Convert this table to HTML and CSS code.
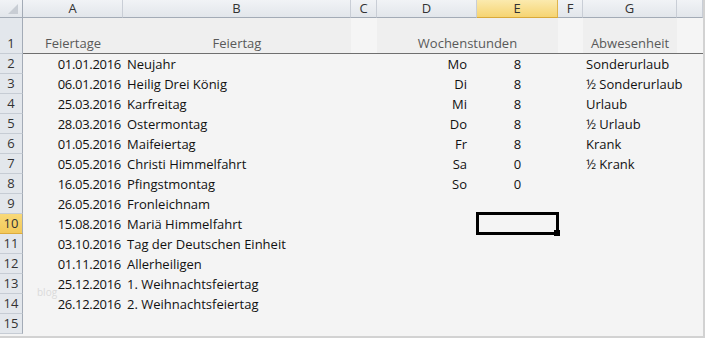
FILE: index.html
```html
<!DOCTYPE html>
<html lang="de">
<head>
    <meta charset="UTF-8">
    <meta name="viewport" content="width=device-width, initial-scale=1.0">
    <title>Feiertage 2016</title>
    <link rel="stylesheet" href="styles.css">
</head>
<body>
    <div class="sheet">
        <!-- column letters -->
        <div class="corner"></div>
        <div class="col-head">A</div>
        <div class="col-head">B</div>
        <div class="col-head">C</div>
        <div class="col-head">D</div>
        <div class="col-head active">E</div>
        <div class="col-head">F</div>
        <div class="col-head">G</div>
        <div class="col-head"></div>

        <!-- row 1: titles -->
        <div class="row-head tall">1</div>
        <div class="cell title">Feiertage</div>
        <div class="cell title">Feiertag</div>
        <div class="cell title light"></div>
        <div class="cell title span-2">Wochenstunden</div>
        <div class="cell title light"></div>
        <div class="cell title">Abwesenheit</div>
        <div class="cell title light"></div>

        <div class="row-head">2</div>
        <div class="cell date">01.01.2016</div>
        <div class="cell name">Neujahr</div>
        <div class="cell"></div>
        <div class="cell day">Mo</div>
        <div class="cell hours">8</div>
        <div class="cell"></div>
        <div class="cell absence">Sonderurlaub</div>
        <div class="cell"></div>

        <div class="row-head">3</div>
        <div class="cell date">06.01.2016</div>
        <div class="cell name">Heilig Drei König</div>
        <div class="cell"></div>
        <div class="cell day">Di</div>
        <div class="cell hours">8</div>
        <div class="cell"></div>
        <div class="cell absence">½ Sonderurlaub</div>
        <div class="cell"></div>

        <div class="row-head">4</div>
        <div class="cell date">25.03.2016</div>
        <div class="cell name">Karfreitag</div>
        <div class="cell"></div>
        <div class="cell day">Mi</div>
        <div class="cell hours">8</div>
        <div class="cell"></div>
        <div class="cell absence">Urlaub</div>
        <div class="cell"></div>

        <div class="row-head">5</div>
        <div class="cell date">28.03.2016</div>
        <div class="cell name">Ostermontag</div>
        <div class="cell"></div>
        <div class="cell day">Do</div>
        <div class="cell hours">8</div>
        <div class="cell"></div>
        <div class="cell absence">½ Urlaub</div>
        <div class="cell"></div>

        <div class="row-head">6</div>
        <div class="cell date">01.05.2016</div>
        <div class="cell name">Maifeiertag</div>
        <div class="cell"></div>
        <div class="cell day">Fr</div>
        <div class="cell hours">8</div>
        <div class="cell"></div>
        <div class="cell absence">Krank</div>
        <div class="cell"></div>

        <div class="row-head">7</div>
        <div class="cell date">05.05.2016</div>
        <div class="cell name">Christi Himmelfahrt</div>
        <div class="cell"></div>
        <div class="cell day">Sa</div>
        <div class="cell hours">0</div>
        <div class="cell"></div>
        <div class="cell absence">½ Krank</div>
        <div class="cell"></div>

        <div class="row-head">8</div>
        <div class="cell date">16.05.2016</div>
        <div class="cell name">Pfingstmontag</div>
        <div class="cell"></div>
        <div class="cell day">So</div>
        <div class="cell hours">0</div>
        <div class="cell"></div>
        <div class="cell"></div>
        <div class="cell"></div>

        <div class="row-head">9</div>
        <div class="cell date">26.05.2016</div>
        <div class="cell name">Fronleichnam</div>
        <div class="cell"></div>
        <div class="cell"></div>
        <div class="cell"></div>
        <div class="cell"></div>
        <div class="cell"></div>
        <div class="cell"></div>

        <div class="row-head active">10</div>
        <div class="cell date">15.08.2016</div>
        <div class="cell name">Mariä Himmelfahrt</div>
        <div class="cell"></div>
        <div class="cell"></div>
        <div class="cell selected"></div>
        <div class="cell"></div>
        <div class="cell"></div>
        <div class="cell"></div>

        <div class="row-head">11</div>
        <div class="cell date">03.10.2016</div>
        <div class="cell name">Tag der Deutschen Einheit</div>
        <div class="cell"></div>
        <div class="cell"></div>
        <div class="cell"></div>
        <div class="cell"></div>
        <div class="cell"></div>
        <div class="cell"></div>

        <div class="row-head">12</div>
        <div class="cell date">01.11.2016</div>
        <div class="cell name">Allerheiligen</div>
        <div class="cell"></div>
        <div class="cell"></div>
        <div class="cell"></div>
        <div class="cell"></div>
        <div class="cell"></div>
        <div class="cell"></div>

        <div class="row-head">13</div>
        <div class="cell date stamped">25.12.2016<span class="watermark">blog</span></div>
        <div class="cell name">1. Weihnachtsfeiertag</div>
        <div class="cell"></div>
        <div class="cell"></div>
        <div class="cell"></div>
        <div class="cell"></div>
        <div class="cell"></div>
        <div class="cell"></div>

        <div class="row-head">14</div>
        <div class="cell date">26.12.2016</div>
        <div class="cell name">2. Weihnachtsfeiertag</div>
        <div class="cell"></div>
        <div class="cell"></div>
        <div class="cell"></div>
        <div class="cell"></div>
        <div class="cell"></div>
        <div class="cell"></div>

        <div class="row-head">15</div>
        <div class="cell"></div>
        <div class="cell"></div>
        <div class="cell"></div>
        <div class="cell"></div>
        <div class="cell"></div>
        <div class="cell"></div>
        <div class="cell"></div>
        <div class="cell"></div>
    </div>
</body>
</html>
```

FILE: styles.css
```css
body {
    margin: 0;
    padding: 0;
    background-color: #f4f4f4;
    font-family: 'Open Sans', 'Liberation Sans', sans-serif;
    font-size: 13px;
    color: #111;
}

.sheet {
    display: grid;
    grid-template-columns: 23px 100px 228px 26px 100px 81px 25px 94px 1fr;
    grid-template-rows: 18px 36px repeat(14, 20px);
    width: 705px;
    height: 338px;
    box-sizing: border-box;
    border-right: 2px solid #d2d2d2;
    border-bottom: 2px solid #d2d2d2;
    background-color: #f4f4f4;
    overflow: hidden;
}

/* headers */
.corner,
.col-head {
    box-sizing: border-box;
    background: linear-gradient(#f1f3f6, #e2e6eb);
    border-right: 1px solid #c9ced6;
    border-bottom: 1px solid #a3abb6;
    line-height: 17px;
    text-align: center;
    color: #333;
}

.corner {
    position: relative;
    border-right-color: #a3abb6;
}

.corner::after {
    content: "";
    position: absolute;
    right: 4px;
    bottom: 3px;
    border-left: 10px solid transparent;
    border-bottom: 10px solid #c8cdd4;
}

.col-head:last-child {
    border-right: none;
}

.col-head.active {
    background: linear-gradient(#fbeaae, #f6d472);
    border-right-color: #e0b44a;
    border-bottom-color: #d9a93a;
}

.row-head {
    box-sizing: border-box;
    background-color: #e3e7ec;
    border-right: 1px solid #a3abb6;
    border-bottom: 1px solid #c6ccd4;
    line-height: 19px;
    text-align: center;
    color: #333;
}

.row-head.tall {
    display: flex;
    align-items: flex-end;
    justify-content: center;
}

.row-head.active {
    background: linear-gradient(#f8d978, #f3c95a);
    border-bottom-color: #dcac3e;
}

/* cells */
.cell {
    line-height: 20px;
    white-space: nowrap;
    overflow: visible;
}

.title {
    display: flex;
    align-items: flex-end;
    justify-content: center;
    box-sizing: border-box;
    background-color: #efefef;
    border-bottom: 1px solid #6f6f6f;
    color: #595959;
}

.title.light {
    background-color: #f5f5f5;
}

.span-2 {
    grid-column: span 2;
}

.date {
    text-align: right;
    padding-right: 2px;
    letter-spacing: -0.3px;
}

.name {
    padding-left: 4px;
}

.day {
    text-align: right;
    padding-right: 10px;
}

.hours {
    text-align: center;
}

.absence {
    padding-left: 3px;
}

/* active cell frame with fill handle */
.selected {
    position: relative;
}

.selected::after {
    content: "";
    position: absolute;
    top: -2px;
    left: -1px;
    right: -1px;
    bottom: -1px;
    border: 3px solid #000;
}

.selected::before {
    content: "";
    position: absolute;
    right: -2px;
    bottom: -2px;
    width: 6px;
    height: 6px;
    background-color: #000;
    z-index: 1;
}

.stamped {
    position: relative;
}

.watermark {
    position: absolute;
    left: 14px;
    top: 11px;
    font-size: 10px;
    line-height: 14px;
    letter-spacing: 0;
    color: #dadada;
}
```
